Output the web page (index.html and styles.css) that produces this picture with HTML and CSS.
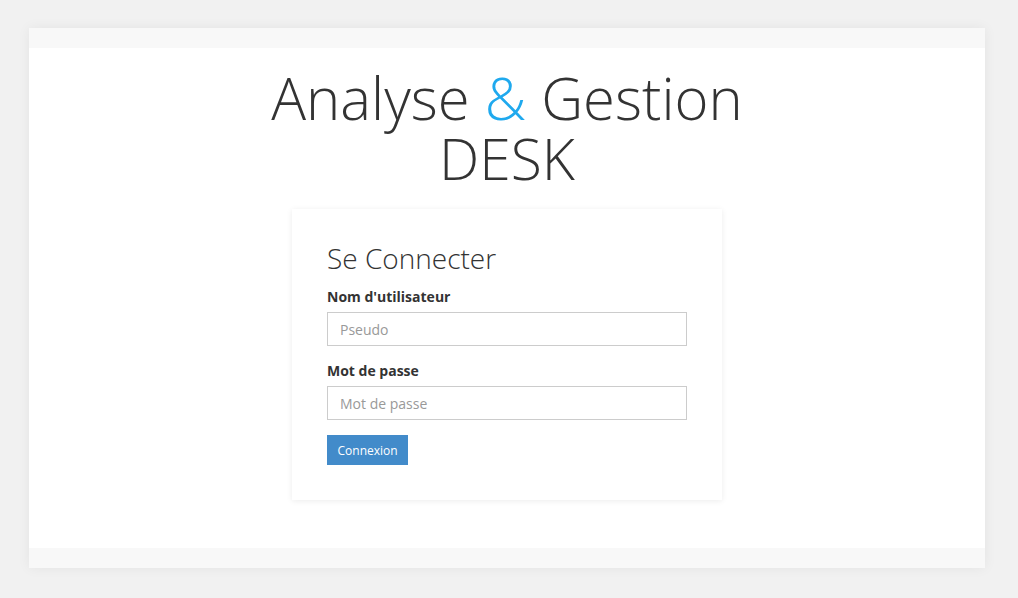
FILE: index.html
```html
<!DOCTYPE html>
<html lang="fr">
<head>
<meta charset="utf-8">
<title>Analyse &amp; Gestion DESK</title>
<link rel="stylesheet" href="styles.css">
</head>
<body>
<div class="page">
  <div class="strip"></div>
  <main class="main">
    <h1 class="brand">
      <span class="brand-line">Analyse <span class="amp">&amp;</span> Gestion</span>
      <span class="brand-sub">DESK</span>
    </h1>
    <form class="card">
      <h2 class="card-title">Se Connecter</h2>
      <label class="label" for="user">Nom d'utilisateur</label>
      <input class="input" id="user" type="text" placeholder="Pseudo">
      <label class="label" for="pass">Mot de passe</label>
      <input class="input" id="pass" type="password" placeholder="Mot de passe">
      <button class="btn" type="button">Connexion</button>
    </form>
  </main>
  <div class="strip"></div>
</div>
</body>
</html>
```
FILE: styles.css
```css
* { box-sizing: border-box; }
html, body { margin: 0; padding: 0; }
body {
  background: #f1f1f1;
  font-family: "Open Sans", "Liberation Sans", sans-serif;
  color: #333;
  padding: 28px 33px 30px 29px;
}
.page {
  width: 956px;
  background: #fff;
  box-shadow: 0 0 12px rgba(0,0,0,0.06);
  display: flex;
  flex-direction: column;
}
.strip {
  height: 20px;
  background: #f8f8f8;
}
.main {
  height: 500px;
  display: flex;
  flex-direction: column;
  align-items: center;
}
.brand {
  margin: 20px 0 0;
  font-weight: 300;
  text-align: center;
  display: flex;
  flex-direction: column;
  align-items: center;
  gap: 2px;
  color: #333;
}
.brand-line {
  font-size: 58px;
  line-height: 60px;
}
.amp {
  display: inline-block;
  line-height: 60px;
  color: #1fa9ee;
}
.brand-sub {
  font-size: 57px;
  line-height: 56px;
}
.card {
  margin-top: 23px;
  width: 430px;
  padding: 30px 35px 35px;
  background: #fff;
  box-shadow: 0 1px 6px rgba(0,0,0,0.08);
  display: flex;
  flex-direction: column;
  align-items: flex-start;
}
.card-title {
  margin: 0 0 10px;
  font-size: 28px;
  line-height: 38px;
  font-weight: 300;
  color: #333;
}
.label {
  font-size: 14px;
  font-weight: 700;
  line-height: 20px;
  margin-bottom: 5px;
  color: #333;
}
.input {
  width: 360px;
  height: 34px;
  border: 1px solid #ccc;
  padding: 6px 12px;
  font-family: inherit;
  font-size: 14px;
  color: #555;
  margin: 0 0 15px;
  outline: none;
}
.input::placeholder { color: #999; }
.btn {
  height: 30px;
  padding: 0 10.5px;
  background: #428bca;
  border: none;
  color: #fff;
  font-family: inherit;
  font-size: 12px;
}
```
